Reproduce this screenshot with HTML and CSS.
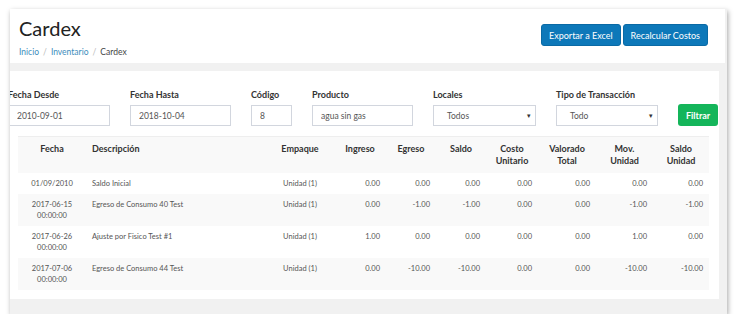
FILE: index.html
```html
<!DOCTYPE html>
<html lang="es">
<head>
  <meta charset="UTF-8" />
  <title>Cardex</title>
  <link rel="stylesheet" href="styles.css">
</head>
<body>
  <div class="frame">
    <div class="page-header">
      <div>
        <h1>Cardex</h1>
        <div class="breadcrumb">
          <a href="#">Inicio</a><span class="sep">/</span><a href="#">Inventario</a><span class="sep">/</span><span class="current">Cardex</span>
        </div>
      </div>
      <div class="actions">
        <button class="btn btn-blue">Exportar a Excel</button>
        <button class="btn btn-blue">Recalcular Costos</button>
      </div>
    </div>

    <div class="card">
      <form class="filters">
        <div class="field w-102">
          <label>Fecha Desde</label>
          <input type="text" value="2010-09-01">
        </div>
        <div class="field w-101">
          <label>Fecha Hasta</label>
          <input type="text" value="2018-10-04">
        </div>
        <div class="field w-code">
          <label>Código</label>
          <input type="text" value="8">
        </div>
        <div class="field w-101">
          <label>Producto</label>
          <input type="text" value="agua sin gas">
        </div>
        <div class="field w-103">
          <label>Locales</label>
          <div class="select">Todos<span class="caret">&#9662;</span></div>
        </div>
        <div class="field w-102">
          <label>Tipo de Transacción</label>
          <div class="select">Todo<span class="caret">&#9662;</span></div>
        </div>
        <div class="field">
          <button type="button" class="btn btn-green">Filtrar</button>
        </div>
      </form>

      <table class="cardex">
        <colgroup>
          <col style="width:68px"><col style="width:180px"><col style="width:68px">
          <col style="width:52px"><col style="width:50px"><col style="width:50px">
          <col style="width:52px"><col style="width:58px"><col style="width:57px"><col style="width:56px">
        </colgroup>
        <thead>
          <tr>
            <th>Fecha</th>
            <th class="left">Descripción</th>
            <th>Empaque</th>
            <th>Ingreso</th>
            <th>Egreso</th>
            <th>Saldo</th>
            <th>Costo<br>Unitario</th>
            <th>Valorado<br>Total</th>
            <th>Mov.<br>Unidad</th>
            <th>Saldo<br>Unidad</th>
          </tr>
        </thead>
        <tbody>
          <tr>
            <td class="center">01/09/2010</td><td>Saldo Inicial</td><td class="center">Unidad (1)</td>
            <td class="num">0.00</td><td class="num">0.00</td><td class="num">0.00</td><td class="num">0.00</td><td class="num">0.00</td><td class="num">0.00</td><td class="num">0.00</td>
          </tr>
          <tr>
            <td class="center">2017-06-15<br>00:00:00</td><td>Egreso de Consumo 40 Test</td><td class="center">Unidad (1)</td>
            <td class="num">0.00</td><td class="num">-1.00</td><td class="num">-1.00</td><td class="num">0.00</td><td class="num">0.00</td><td class="num">-1.00</td><td class="num">-1.00</td>
          </tr>
          <tr>
            <td class="center">2017-06-26<br>00:00:00</td><td>Ajuste por Fisico Test #1</td><td class="center">Unidad (1)</td>
            <td class="num">1.00</td><td class="num">0.00</td><td class="num">0.00</td><td class="num">0.00</td><td class="num">0.00</td><td class="num">1.00</td><td class="num">0.00</td>
          </tr>
          <tr>
            <td class="center">2017-07-06<br>00:00:00</td><td>Egreso de Consumo 44 Test</td><td class="center">Unidad (1)</td>
            <td class="num">0.00</td><td class="num">-10.00</td><td class="num">-10.00</td><td class="num">0.00</td><td class="num">0.00</td><td class="num">-10.00</td><td class="num">-10.00</td>
          </tr>
        </tbody>
      </table>
    </div>
  </div>
</body>
</html>
```

FILE: styles.css
```css
body {
  margin: 0;
  background-color: #fff;
  font-family: 'Lato', 'Open Sans', sans-serif;
  color: #333;
}
.frame {
  margin: 9px 0 0 10px;
  width: 717px;
  height: 305px;
  overflow: hidden;
  background-color: #f1f1f1;
  box-shadow: 1px 2px 5px rgba(0, 0, 0, 0.35);
}
.page-header {
  display: flex;
  justify-content: space-between;
  align-items: flex-start;
  background-color: #fff;
  width: 715px;
  height: 54px;
  box-sizing: border-box;
  padding: 6px 17px 0 9px;
}
h1 {
  margin: 0;
  font-size: 20px;
  font-weight: 400;
  color: #222;
  line-height: 26px;
}
.breadcrumb {
  margin-top: 5px;
  font-size: 8.5px;
  line-height: 12px;
}
.breadcrumb a {
  color: #3c8dbc;
  text-decoration: none;
}
.breadcrumb .sep {
  color: #bbb;
  padding: 0 4px;
}
.breadcrumb .current {
  color: #444;
}
.actions {
  display: flex;
  gap: 2px;
  margin-top: 9px;
}
.btn {
  font-family: inherit;
  font-size: 9px;
  color: #fff;
  border: none;
  border-radius: 3px;
  height: 22px;
  padding: 0 7px;
  cursor: pointer;
}
.btn-blue {
  background-color: #0d78b9;
  border: 1px solid #0a6aa5;
}
.btn-green {
  background-color: #14b55a;
  font-weight: 700;
  height: 22px;
  padding: 0 8px;
}
.card {
  background-color: #fff;
  width: 709px;
  height: 228px;
  margin-top: 8px;
  box-sizing: border-box;
  padding-top: 17px;
}
.filters {
  display: flex;
  align-items: flex-end;
  gap: 20px;
  margin: 0 0 0 -2px;
}
.field {
  display: flex;
  flex-direction: column;
}
.w-101 { width: 101px; }
.w-102 { width: 102px; }
.w-103 { width: 103px; }
.w-code { width: 41px; }
.field label {
  font-size: 9px;
  font-weight: 700;
  line-height: 14px;
  margin-bottom: 3px;
  color: #333;
  white-space: nowrap;
}
.field input,
.select {
  font-family: inherit;
  font-size: 8.5px;
  color: #555;
  height: 21px;
  box-sizing: border-box;
  border: 1px solid #d2d6de;
  padding: 0 8px;
  margin: 0;
  outline: none;
}
.select {
  display: flex;
  align-items: center;
  justify-content: space-between;
  padding: 0 4px 0 13px;
}
.caret {
  font-size: 7px;
  color: #333;
}
.cardex {
  margin: 10px 0 0 8px;
  width: 691px;
  table-layout: fixed;
  border-collapse: collapse;
  border-top: 1px solid #eee;
  font-size: 7.5px;
  color: #555;
}
.cardex th {
  background-color: #f9f9f9;
  font-size: 9px;
  font-weight: 700;
  color: #333;
  line-height: 12px;
  padding: 6px 4px;
  height: 24px;
  vertical-align: top;
  text-align: center;
}
.cardex th.left {
  text-align: left;
  padding-left: 6px;
}
.cardex td {
  line-height: 11px;
  padding: 5px 6px;
  vertical-align: top;
}
.cardex tbody tr:nth-child(even) td {
  background-color: #f9f9f9;
}
.cardex td.center {
  text-align: center;
}
.cardex td.num {
  text-align: right;
}
```
